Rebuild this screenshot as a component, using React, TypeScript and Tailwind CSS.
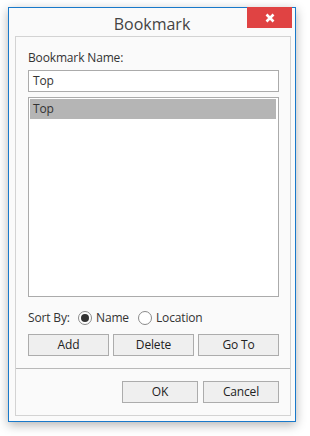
import React from "react";

const font = { fontFamily: '"Segoe UI", "Open Sans", "Noto Sans", sans-serif' };

function Radio({ checked, label }: { checked: boolean; label: string }) {
  return (
    <div className="flex items-center gap-[4px]">
      <div className="w-[14px] h-[14px] rounded-full border border-[#8a8a8a] bg-white flex items-center justify-center">
        {checked && <div className="w-[8px] h-[8px] rounded-full bg-[#333]" />}
      </div>
      <span>{label}</span>
    </div>
  );
}

function Btn({ label, w }: { label: string; w: string }) {
  return (
    <div className={`${w} h-[22px] border border-[#acacac] bg-[#efefef] flex items-center justify-center text-[#222]`}>
      {label}
    </div>
  );
}

export default function App() {
  return (
    <div className="w-[310px] h-[436px] bg-white pt-[7px] pl-[8px]" style={font}>
      <div className="w-[288px] h-[415px] border border-[#1979ca] bg-[#fafafa] shadow-[0_3px_10px_rgba(0,0,0,0.3)] flex flex-col">
        <div className="relative h-[28px] flex items-center justify-center text-[16px] text-[#444]">
          <span className="leading-none mt-[3px]">Bookmark</span>
          <div className="absolute top-[-1px] right-[3px] w-[45px] h-[21px] bg-[#e04343] flex items-center justify-center">
            <svg width="10" height="10" viewBox="0 0 10 10">
              <path d="M1.5 1.5 L8.5 8.5 M8.5 1.5 L1.5 8.5" stroke="white" strokeWidth="2.6" />
            </svg>
          </div>
        </div>
        <div className="ml-[6px] w-[276px] border border-[#d3d3d3] flex flex-col text-[12px] text-[#333] leading-[16px] tracking-[-0.15px]">
          <div className="pl-[12px] pr-[11px] pt-[13px] flex flex-col">
            <div className="h-[16px]">Bookmark Name:</div>
            <div className="mt-[4px] h-[22px] border border-[#ababab] bg-white flex items-center pl-[4px]">Top</div>
            <div className="mt-[5px] h-[200px] border border-[#ababab] bg-white pt-[1px] pl-[1px] pr-[2px]">
              <div className="h-[20px] bg-[#b5b5b5] flex items-center pl-[3px]">Top</div>
            </div>
            <div className="mt-[13px] h-[16px] flex items-center">
              <span className="w-[50px]">Sort By:</span>
              <div className="flex items-center gap-[9px]">
                <Radio checked label="Name" />
                <Radio checked={false} label="Location" />
              </div>
            </div>
            <div className="mt-[8px] flex gap-[4px]">
              <Btn label="Add" w="w-[81px]" />
              <Btn label="Delete" w="w-[81px]" />
              <Btn label="Go To" w="w-[81px]" />
            </div>
          </div>
          <div className="mt-[12px] border-t border-[#b9b9b9] pt-[12px] pb-[12px] pr-[11px] flex justify-end gap-[5px]">
            <Btn label="OK" w="w-[76px]" />
            <Btn label="Cancel" w="w-[76px]" />
          </div>
        </div>
      </div>
    </div>
  );
}
